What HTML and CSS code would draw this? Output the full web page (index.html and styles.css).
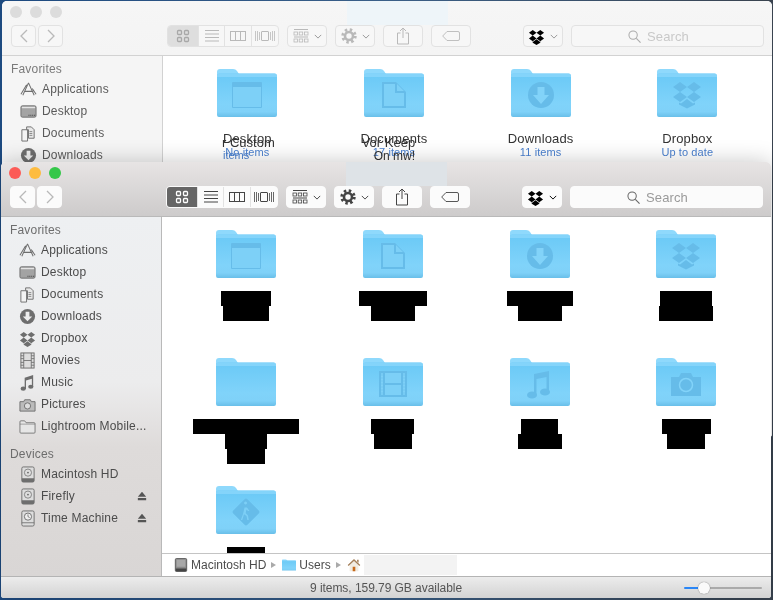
FILE: index.html
```html
<!DOCTYPE html>
<html lang="en">
<head>
<meta charset="utf-8">
<title>Finder</title>
<link rel="stylesheet" href="styles.css">
</head>
<body>
<svg class="defs" aria-hidden="true">
  <defs>
    <linearGradient id="fbody" x1="0" y1="0" x2="0" y2="1">
      <stop offset="0" stop-color="#6ac9f6"/><stop offset=".7" stop-color="#80d3fa"/><stop offset=".88" stop-color="#7fd1f8"/><stop offset="1" stop-color="#69bfe9"/>
    </linearGradient>
    <symbol id="folder" viewBox="0 0 60 48">
      <path d="M0 3a3 3 0 0 1 3-3h13c2 0 3 .8 4 2l2 3v8H0z" fill="#8fd9fc"/>
      <path d="M0 7a2.500 2.500 0 0 1 2.500-2.500H57.500A2.500 2.500 0 0 1 60 7V46a2 2 0 0 1-2 2H2a2 2 0 0 1-2-2z" fill="url(#fbody)"/>
      <path d="M0 7a2.500 2.500 0 0 1 2.500-2.500H57.500A2.500 2.500 0 0 1 60 7v1H0z" fill="#8fd9fc" opacity=".7"/>
    </symbol>
    <symbol id="g-window" viewBox="0 0 60 48">
      <rect x="15" y="13" width="30" height="26" rx="1" fill="#66bce9"/><rect x="16" y="18" width="28" height="20" fill="#7dd0f7"/>
    </symbol>
    <symbol id="g-doc" viewBox="0 0 60 48">
      <path d="M18 13h14l10 10v16H18z" fill="#66bce9"/><path d="M20 15h11v9h9v13H20z" fill="#7dd0f7"/><path d="M33 15l7 7h-7z" fill="#7dd0f7"/>
    </symbol>
    <symbol id="g-down" viewBox="0 0 60 48">
      <circle cx="30" cy="26" r="13" fill="#66bce9"/><path d="M26.500 18h7v8h4.500l-8 9-8-9h4.500z" fill="#82d3f9"/>
    </symbol>
    <symbol id="g-drop" viewBox="0 0 60 48">
      <path d="M23 13l-7 5 7 5 7-5zM37 13l-7 5 7 5 7-5zM16 28l7 5 7-5-7-5zM44 28l-7 5-7-5 7-5z" fill="#66bce9"/><path d="M30 30l-6 4.500-2-1v2l8 4 8-4v-2l-2 1z" fill="#66bce9"/>
    </symbol>
    <symbol id="g-movie" viewBox="0 0 60 48">
      <path d="M16 13h28v26H16z" fill="#66bce9"/><path d="M22 15h16v10H22zM22 27h16v10H22z" fill="#7dd0f7"/><path d="M18 15h2v22h-2zM40 15h2v22h-2z" fill="#7dd0f7" stroke="#66bce9" stroke-dasharray="2 1" stroke-width=".5"/>
    </symbol>
    <symbol id="g-music" viewBox="0 0 60 48">
      <path d="M24 16l15-3v21h-2.500V19l-10 2v16h-2.500z" fill="#66bce9"/><ellipse cx="22" cy="37" rx="5" ry="3.600" fill="#66bce9"/><ellipse cx="35" cy="34" rx="5" ry="3.600" fill="#66bce9"/>
    </symbol>
    <symbol id="g-cam" viewBox="0 0 60 48">
      <path d="M15 19h8l2-4h10l2 4h8v19H15z" fill="#66bce9"/><circle cx="30" cy="27" r="6.500" fill="none" stroke="#82d3f9" stroke-width="1.500"/>
    </symbol>
    <symbol id="g-pub" viewBox="0 0 60 48">
      <rect x="20" y="16" width="20" height="20" rx="2" transform="rotate(45 30 26)" fill="#66bce9"/>
      <path d="M29.500 18.500a1.500 1.500 0 1 1 .1 0zM27 28l1.500-6.500h2.500l2.500 3.500h-1.500l-1.500-1.500-.8 3.500 2.300 2.500.8 4.500h-1.500l-.8-4-2.500-1.800-1.700 5.800h-1.500z" fill="#82d3f9" opacity=".8"/>
    </symbol>

    <symbol id="i-apps" viewBox="0 0 18 18"><path d="M9 2L3 15M9 2l6 13M5 11h9M1 14L7 4M17 14l-4-6" fill="none" stroke="currentColor" stroke-width="1.100"/></symbol>
    <symbol id="i-desk" viewBox="0 0 18 18"><rect x="1" y="3" width="16" height="12" rx="1.500" fill="#a3a3a3" stroke="currentColor"/><rect x="2" y="4" width="14" height="1.500" fill="#e4e4e4"/><path d="M9 13h1M11 13h1M13 13h1M15 13h1" stroke="#333"/></symbol>
    <symbol id="i-docs" viewBox="0 0 18 18"><path d="M2 5h6v12H2z" fill="#f3f3f3" stroke="currentColor"/><path d="M7 2h5l3 3v9H9V5H7z" fill="#e8e8e8" stroke="currentColor"/><path d="M10 7h3M10 9h3M10 11h3" stroke="currentColor" stroke-width=".8"/></symbol>
    <symbol id="i-down" viewBox="0 0 18 18"><circle cx="9" cy="9" r="8" fill="currentColor"/><path d="M7 4h4v5h3l-5 5-5-5h3z" fill="#eee"/></symbol>
    <symbol id="i-drop" viewBox="0 0 18 18"><path d="M5 2L1 5l4 3 4-3zM13 2L9 5l4 3 4-3zM1 11l4 3 4-3-4-3zM17 11l-4 3-4-3 4-3z" fill="currentColor"/><path d="M9 12l-3.500 2.500L5 14v1.500L9 18l4-2.500V14l-.5.500z" fill="currentColor"/></symbol>
    <symbol id="i-movie" viewBox="0 0 18 18"><rect x="2" y="1" width="14" height="16" fill="#ddd" stroke="currentColor"/><path d="M5 1v16M13 1v16M5 9h8M2 4h3M2 7h3M2 11h3M2 14h3M13 4h3M13 7h3M13 11h3M13 14h3" stroke="currentColor" stroke-width=".9"/></symbol>
    <symbol id="i-music" viewBox="0 0 18 18"><path d="M6 4l9-3v12h-1.400V5L7.400 7v9H6z" fill="currentColor"/><ellipse cx="4.500" cy="15.500" rx="2.800" ry="2.200" fill="currentColor"/><ellipse cx="12.500" cy="13.500" rx="2.800" ry="2.200" fill="currentColor"/></symbol>
    <symbol id="i-pics" viewBox="0 0 18 18"><path d="M1 6h4l1-2h6l1 2h4v10H1z" fill="#bbb" stroke="currentColor"/><circle cx="9" cy="10.500" r="3.300" fill="#ddd" stroke="currentColor"/></symbol>
    <symbol id="i-folder" viewBox="0 0 18 18"><path d="M1 4a1 1 0 0 1 1-1h4l1.500 2H16a1 1 0 0 1 1 1v9a1 1 0 0 1-1 1H2a1 1 0 0 1-1-1z" fill="#e6e6e6" stroke="currentColor" stroke-width=".9"/><path d="M1 6.500h16" stroke="currentColor" stroke-width=".6"/></symbol>
    <symbol id="i-hd" viewBox="0 0 18 18"><rect x="3" y="1" width="13" height="16" rx="1.500" fill="#ddd" stroke="currentColor"/><circle cx="9.500" cy="7" r="3.800" fill="none" stroke="currentColor" stroke-width=".8"/><circle cx="9.500" cy="7" r="1" fill="currentColor"/><path d="M3 13h13v3a1 1 0 0 1-1 1H4a1 1 0 0 1-1-1z" fill="currentColor"/></symbol>
    <symbol id="i-disk" viewBox="0 0 14 16"><rect x=".5" y=".5" width="13" height="15" rx="1.500" fill="#8a8a8a" stroke="#555"/><rect x="2" y="2" width="10" height="8" fill="#a8a8a8"/><path d="M1 12h12v3H1z" fill="#444"/></symbol>
    <symbol id="i-tm" viewBox="0 0 18 18"><rect x="3" y="1" width="13" height="16" rx="1.500" fill="#ddd" stroke="currentColor"/><circle cx="9.500" cy="7" r="3.800" fill="#eee" stroke="currentColor"/><path d="M9.500 4.700V7l1.800 1M3 13.500h13" fill="none" stroke="currentColor" stroke-width=".9"/></symbol>
    <symbol id="i-eject" viewBox="0 0 12 12"><path d="M6 1l5 6H1zM1 8.500h10V11H1z" fill="currentColor"/></symbol>
    <symbol id="i-home" viewBox="0 0 16 16"><path d="M3 8v7h10V8L8 3.500z" fill="#f1ece2"/><path d="M6.500 10h3v5h-3z" fill="#c76a1c"/><path d="M8 1L.8 8l1 1L8 3.300 14.200 9l1-1zM11.500 2h1.800v3.500l-1.800-1.500z" fill="#a5805a"/></symbol>

    <symbol id="t-left" viewBox="0 0 12 16"><path d="M9 2L3 8l6 6" fill="none" stroke="currentColor" stroke-width="1.300"/></symbol>
    <symbol id="t-right" viewBox="0 0 12 16"><path d="M3 2l6 6-6 6" fill="none" stroke="currentColor" stroke-width="1.300"/></symbol>
    <symbol id="t-grid" viewBox="0 0 14 14"><rect x="1.500" y="1.500" width="4" height="4" rx="1" fill="none" stroke="currentColor" stroke-width="1.300"/><rect x="8.500" y="1.500" width="4" height="4" rx="1" fill="none" stroke="currentColor" stroke-width="1.300"/><rect x="1.500" y="8.500" width="4" height="4" rx="1" fill="none" stroke="currentColor" stroke-width="1.300"/><rect x="8.500" y="8.500" width="4" height="4" rx="1" fill="none" stroke="currentColor" stroke-width="1.300"/></symbol>
    <symbol id="t-list" viewBox="0 0 14 12"><path d="M0 .5h14M0 4h14M0 7.500h14M0 11h14" stroke="currentColor"/></symbol>
    <symbol id="t-cols" viewBox="0 0 16 10"><rect x=".5" y=".5" width="15" height="9" fill="none" stroke="currentColor"/><path d="M5.500 0v10M10.500 0v10" stroke="currentColor"/></symbol>
    <symbol id="t-flow" viewBox="0 0 20 10"><rect x="6.500" y=".5" width="7" height="9" rx=".5" fill="none" stroke="currentColor"/><path d="M.5 0v10M2.500 0v10M4.500 1v8M15.500 1v8M17.500 0v10M19.500 0v10" stroke="currentColor" stroke-width=".8"/></symbol>
    <symbol id="t-arr" viewBox="0 0 16 14"><path d="M1 .5h14" stroke="currentColor"/><rect x="1" y="3" width="3.500" height="3" fill="none" stroke="currentColor" stroke-width=".8"/><rect x="6.200" y="3" width="3.500" height="3" fill="none" stroke="currentColor" stroke-width=".8"/><rect x="11.500" y="3" width="3.500" height="3" fill="none" stroke="currentColor" stroke-width=".8"/><path d="M1 8h14" stroke="currentColor"/><rect x="1" y="10" width="3.500" height="3" fill="none" stroke="currentColor" stroke-width=".8"/><rect x="6.200" y="10" width="3.500" height="3" fill="none" stroke="currentColor" stroke-width=".8"/><rect x="11.500" y="10" width="3.500" height="3" fill="none" stroke="currentColor" stroke-width=".8"/></symbol>
    <symbol id="t-gear" viewBox="0 0 16 16"><circle cx="8" cy="8" r="6.200" fill="none" stroke="currentColor" stroke-width="3" stroke-dasharray="2.400 2.470"/><circle cx="8" cy="8" r="4" fill="none" stroke="currentColor" stroke-width="2.600"/></symbol>
    <symbol id="t-chev" viewBox="0 0 10 6"><path d="M1 1l4 4 4-4" fill="none" stroke="currentColor" stroke-width="1.200"/></symbol>
    <symbol id="t-share" viewBox="0 0 14 18"><path d="M4.500 6H1.500v11h11V6H9.500M7 11V1.500M4 4l3-3 3 3" fill="none" stroke="currentColor"/></symbol>
    <symbol id="t-tag" viewBox="0 0 18 10"><path d="M5 .5h11a1.500 1.500 0 0 1 1.500 1.500v6A1.500 1.500 0 0 1 16 9.500H5L.7 5z" fill="none" stroke="currentColor" stroke-width=".9"/></symbol>
    <symbol id="t-search" viewBox="0 0 14 14"><circle cx="5.500" cy="5.500" r="4.500" fill="none" stroke="currentColor" stroke-width="1.100"/><path d="M9 9l4.500 4.500" stroke="currentColor" stroke-width="1.200"/></symbol>
  </defs>
</svg>

<div class="desk">

  <section class="win win-back">
    <header class="head">
      <div class="titlebar">
        <div class="lights"><i class="light"></i><i class="light"></i><i class="light"></i></div>
        <svg class="home"><use href="#i-home"/></svg>
        <span class="smudge"></span>
      </div>
      <div class="toolbar">
        <div class="seg nav"><span class="btn nb"><svg class="ic-nav"><use href="#t-left"/></svg></span><span class="btn nb"><svg class="ic-nav"><use href="#t-right"/></svg></span></div>
        <div class="seg views">
          <span class="v v1 on"><svg class="ic-grid"><use href="#t-grid"/></svg></span><span class="v v2"><svg class="ic-list"><use href="#t-list"/></svg></span><span class="v v3"><svg class="ic-cols"><use href="#t-cols"/></svg></span><span class="v v4"><svg class="ic-flow"><use href="#t-flow"/></svg></span>
        </div>
        <span class="btn b40 arrbtn"><svg class="ic-arr"><use href="#t-arr"/></svg><svg class="ic-chev"><use href="#t-chev"/></svg></span>
        <span class="btn b40"><svg class="ic-gear"><use href="#t-gear"/></svg><svg class="ic-chev"><use href="#t-chev"/></svg></span>
        <span class="btn b40"><svg class="ic-share"><use href="#t-share"/></svg></span>
        <span class="btn b40"><svg class="ic-tag"><use href="#t-tag"/></svg></span>
        <span class="btn b40 dropbtn"><svg class="ic-dropbox"><use href="#i-drop"/></svg><svg class="ic-chev"><use href="#t-chev"/></svg></span>
        <span class="btn searchbox"><svg class="ic-search"><use href="#t-search"/></svg>Search</span>
      </div>
    </header>
    <div class="body">
      <aside class="side">
        <div class="side-h">Favorites</div>
        <div class="row"><svg class="ri"><use href="#i-apps"/></svg>Applications</div>
        <div class="row"><svg class="ri"><use href="#i-desk"/></svg>Desktop</div>
        <div class="row"><svg class="ri"><use href="#i-docs"/></svg>Documents</div>
        <div class="row"><svg class="ri"><use href="#i-down"/></svg>Downloads</div>
      </aside>
      <main class="main">
        <div class="grid">
          <div class="item"><svg class="folder"><use href="#folder"/><use href="#g-window"/></svg><div class="name">Desktop</div><div class="sub">No items</div><span class="ghost g1">r Custom</span><span class="ghost g1b">items</span></div>
          <div class="item"><svg class="folder"><use href="#folder"/><use href="#g-doc"/></svg><div class="name">Documents</div><div class="sub">17 items</div><span class="ghost g2">Vor Keep</span><span class="ghost g2b">On mw!</span></div>
          <div class="item"><svg class="folder"><use href="#folder"/><use href="#g-down"/></svg><div class="name">Downloads</div><div class="sub">11 items</div></div>
          <div class="item"><svg class="folder"><use href="#folder"/><use href="#g-drop"/></svg><div class="name">Dropbox</div><div class="sub">Up to date</div></div>
        </div>
      </main>
    </div>
  </section>

  <section class="win win-front">
    <header class="head">
      <div class="titlebar">
        <div class="lights"><i class="light red"></i><i class="light yel"></i><i class="light grn"></i></div>
        <svg class="home"><use href="#i-home"/></svg>
        <span class="smudge"></span>
      </div>
      <div class="toolbar">
        <div class="seg nav"><span class="btn nb"><svg class="ic-nav"><use href="#t-left"/></svg></span><span class="btn nb"><svg class="ic-nav"><use href="#t-right"/></svg></span></div>
        <div class="seg views">
          <span class="v v1 on"><svg class="ic-grid"><use href="#t-grid"/></svg></span><span class="v v2"><svg class="ic-list"><use href="#t-list"/></svg></span><span class="v v3"><svg class="ic-cols"><use href="#t-cols"/></svg></span><span class="v v4"><svg class="ic-flow"><use href="#t-flow"/></svg></span>
        </div>
        <span class="btn b40 arrbtn"><svg class="ic-arr"><use href="#t-arr"/></svg><svg class="ic-chev"><use href="#t-chev"/></svg></span>
        <span class="btn b40"><svg class="ic-gear"><use href="#t-gear"/></svg><svg class="ic-chev"><use href="#t-chev"/></svg></span>
        <span class="btn b40"><svg class="ic-share"><use href="#t-share"/></svg></span>
        <span class="btn b40"><svg class="ic-tag"><use href="#t-tag"/></svg></span>
        <span class="btn b40 dropbtn"><svg class="ic-dropbox"><use href="#i-drop"/></svg><svg class="ic-chev"><use href="#t-chev"/></svg></span>
        <span class="btn searchbox"><svg class="ic-search"><use href="#t-search"/></svg>Search</span>
      </div>
    </header>
    <div class="body">
      <aside class="side">
        <div class="side-h">Favorites</div>
        <div class="row"><svg class="ri"><use href="#i-apps"/></svg>Applications</div>
        <div class="row"><svg class="ri"><use href="#i-desk"/></svg>Desktop</div>
        <div class="row"><svg class="ri"><use href="#i-docs"/></svg>Documents</div>
        <div class="row"><svg class="ri"><use href="#i-down"/></svg>Downloads</div>
        <div class="row"><svg class="ri"><use href="#i-drop"/></svg>Dropbox</div>
        <div class="row"><svg class="ri"><use href="#i-movie"/></svg>Movies</div>
        <div class="row"><svg class="ri"><use href="#i-music"/></svg>Music</div>
        <div class="row"><svg class="ri"><use href="#i-pics"/></svg>Pictures</div>
        <div class="row"><svg class="ri"><use href="#i-folder"/></svg>Lightroom Mobile...</div>
        <div class="side-h devices">Devices</div>
        <div class="row"><svg class="ri"><use href="#i-hd"/></svg>Macintosh HD</div>
        <div class="row"><svg class="ri"><use href="#i-hd"/></svg>Firefly<svg class="eject"><use href="#i-eject"/></svg></div>
        <div class="row"><svg class="ri"><use href="#i-tm"/></svg>Time Machine<svg class="eject"><use href="#i-eject"/></svg></div>
      </aside>
      <main class="main">
        <div class="grid">
          <div class="item"><svg class="folder"><use href="#folder"/><use href="#g-window"/></svg><div class="redact"><b class="w50"></b><b class="w46"></b></div></div>
          <div class="item"><svg class="folder"><use href="#folder"/><use href="#g-doc"/></svg><div class="redact"><b class="w68"></b><b class="w44"></b></div></div>
          <div class="item"><svg class="folder"><use href="#folder"/><use href="#g-down"/></svg><div class="redact"><b class="w66"></b><b class="w44"></b></div></div>
          <div class="item"><svg class="folder"><use href="#folder"/><use href="#g-drop"/></svg><div class="redact"><b class="w52"></b><b class="w54"></b></div></div>
          <div class="item"><svg class="folder"><use href="#folder"/></svg><div class="redact"><b class="w106"></b><b class="w42"></b><b class="w38"></b></div></div>
          <div class="item"><svg class="folder"><use href="#folder"/><use href="#g-movie"/></svg><div class="redact"><b class="w43"></b><b class="w38"></b></div></div>
          <div class="item"><svg class="folder"><use href="#folder"/><use href="#g-music"/></svg><div class="redact"><b class="w37"></b><b class="w44"></b></div></div>
          <div class="item"><svg class="folder"><use href="#folder"/><use href="#g-cam"/></svg><div class="redact"><b class="w49"></b><b class="w38"></b></div></div>
          <div class="item"><svg class="folder"><use href="#folder"/><use href="#g-pub"/></svg><div class="redact"><b class="w38"></b></div></div>
        </div>
        <div class="pathbar">
          <svg class="pi"><use href="#i-disk"/></svg><span>Macintosh HD</span><i class="caret"></i>
          <svg class="pf"><use href="#folder"/></svg><span>Users</span><i class="caret"></i>
          <svg class="pi"><use href="#i-home"/></svg><span class="pblank"></span>
        </div>
      </main>
    </div>
    <footer class="status">
      <span>9 items, 159.79 GB available</span>
      <div class="slider"><i class="knob"></i></div>
    </footer>
  </section>

</div>
</body>
</html>
```

FILE: styles.css
```css
* { box-sizing: border-box; }
html, body { margin: 0; height: 100%; }
body { background: #24496f; overflow: hidden; font-family: "Liberation Sans", Arial, sans-serif; }
.defs { position: absolute; width: 0; height: 0; }
.desk { position: relative; width: 773px; height: 600px; overflow: hidden; filter: blur(.35px); background: linear-gradient(90deg, #1d4a80, #3a5f88 50%, #39434f); }

.win { position: absolute; width: 770px; height: 436px; display: flex; flex-direction: column; border-radius: 5px 5px 3px 3px; overflow: hidden; background: #fff; }
.win-back { left: 2px; top: 1px; --title: #f6f6f6; --title2: #f4f4f4; --btn: #f7f7f7; --btn-line: #e2e2e2; --ic: #b9b9b9; --txt: #5a5a5a; --head: #7a7a7a; --side: #f5f5f5; --line: #d2d2d2; --search: #c9c9c9; --smudge: #eef5f9; --on: #dedede; --on-ic: #a8a8a8; }
.win-front { left: 1px; top: 162px; --title: #e7e4e4; --title2: #cdcbcb; --btn: #fbfbfb; --btn-line: #fbfbfb; --ic: #444; --txt: #4c4c4c; --head: #6d6d6d; --side: #efeff0; --line: #b9b9b9; --search: #9a9a9a; --smudge: #dee3e7; --on: #666; --on-ic: #fff; box-shadow: 0 0 22px rgba(0,0,0,.22); }

.head { height: 55px; flex: none; display: flex; flex-direction: column; border-bottom: 1px solid var(--line); background: linear-gradient(var(--title), var(--title2)); }
.titlebar { height: 24px; flex: none; position: relative; display: flex; justify-content: center; align-items: center; }
.lights { position: absolute; left: 8px; top: 5px; display: flex; gap: 8px; }
.light { width: 12px; height: 12px; border-radius: 50%; background: #dcdcdc; }
.red { background: #fc5b57; } .yel { background: #fdbc40; } .grn { background: #34c749; }
.home { width: 16px; height: 16px; margin-top: -1px; margin-left: -1px; }
.smudge { position: absolute; left: 345px; top: 0; width: 101px; height: 24px; background: var(--smudge); }

.toolbar { display: flex; align-items: flex-start; padding-left: 9px; height: 23px; color: var(--ic); }
.seg { display: flex; }
.btn { display: flex; align-items: center; justify-content: center; height: 22px; background: var(--btn); border: 1px solid var(--btn-line); border-radius: 4px; gap: 5px; }
.nav { gap: 2px; margin-right: 104px; }
.nb { width: 25px; }
.win-front .nb { color: #b8b8b8; }
.views { height: 22px; border-radius: 4px; overflow: hidden; background: var(--btn); border: 1px solid var(--btn-line); margin-right: 8px; width: 112px; }
.v { display: flex; align-items: center; justify-content: center; width: 27px; border-left: 1px solid #e2e2e2; }
.v1 { width: 30px; border-left: 0; }
.v.on { background: var(--on); color: var(--on-ic); }
.b40 { width: 40px; margin-right: 8px; flex: none; }
.dropbtn { margin-left: 44px; color: #000; }
.searchbox { width: 193px; gap: 6px; padding-right: 18px; font-size: 13px; letter-spacing: .1px; color: var(--search); }
.ic-nav { width: 12px; height: 16px; }
.ic-grid { width: 14px; height: 14px; }
.ic-list { width: 14px; height: 12px; }
.ic-cols { width: 16px; height: 10px; }
.ic-flow { width: 20px; height: 10px; }
.ic-arr { width: 16px; height: 14px; }
.ic-gear { width: 16px; height: 16px; }
.ic-chev { width: 8px; height: 5px; }
.ic-share { width: 14px; height: 18px; }
.ic-tag { width: 18px; height: 10px; }
.ic-dropbox { width: 17px; height: 17px; }
.ic-search { width: 13px; height: 13px; color: #666; }
.win-back .ic-search { color: #aaa; }
.win-back .ic-chev { color: #999; }

.body { flex: 1; display: flex; min-height: 0; }
.side { width: 161px; flex: none; padding-top: 4px; background: var(--side); border-right: 1px solid var(--line); font-size: 12px; letter-spacing: .18px; color: var(--txt); overflow: hidden; }
.win-front .side { background: linear-gradient(#eef0f2, #ececed 46%, #dedbda 64%, #d9d6d5); }
.side-h { height: 18px; line-height: 18px; padding-left: 9px; color: var(--head); }
.devices { margin-top: 8px; }
.row { height: 22px; display: flex; align-items: center; padding-left: 18px; white-space: nowrap; color: var(--txt); }
.ri { width: 17px; height: 17px; margin-right: 5px; flex: none; color: #6e6e6e; }
.eject { width: 10px; height: 10px; margin-left: auto; margin-right: 14px; color: #555; }

.main { flex: 1; display: flex; flex-direction: column; min-width: 0; background: #fff; }
.grid { flex: 1; min-height: 0; overflow: hidden; display: grid; grid-template-columns: repeat(4, 146.67px); grid-auto-rows: 128px; padding: 13px 0 0 11px; }
.item { position: relative; display: flex; flex-direction: column; align-items: center; }
.folder { width: 60px; height: 48px; flex: none; }
.name { margin-top: 14px; font-size: 13px; line-height: 15px; letter-spacing: .15px; color: #333; }
.sub { font-size: 11px; line-height: 13px; letter-spacing: .1px; color: #4a80cf; }
.ghost { position: absolute; font-size: 13px; line-height: 15px; color: #333; white-space: nowrap; }
.g1 { top: 66px; left: 48px; }
.g1b { top: 79px; left: 49px; font-size: 11px; color: #4a80cf; }
.g2 { top: 66px; left: 41px; }
.g2b { top: 80px; left: 53px; font-size: 12px; }

.redact { margin-top: 13px; display: flex; flex-direction: column; align-items: center; filter: drop-shadow(0 0 .6px #777); }
.redact b { display: block; height: 15px; background: #000; }
.w106 { width: 106px; } .w68 { width: 68px; } .w66 { width: 66px; } .w54 { width: 54px; } .w52 { width: 52px; }
.w50 { width: 50px; } .w49 { width: 49px; } .w46 { width: 46px; } .w44 { width: 44px; } .w43 { width: 43px; }
.w42 { width: 42px; } .w38 { width: 38px; } .w37 { width: 37px; }

.pathbar { height: 23px; flex: none; display: flex; align-items: center; padding-left: 12px; gap: 3px; border-top: 1px solid #c4c4c4; background: #fff; font-size: 12px; color: #4c4c4c; }
.pi { width: 14px; height: 14px; color: #555; }
.pf { width: 14px; height: 12px; }
.caret { width: 0; height: 0; margin: 0 3px 0 2px; border-left: 5px solid #aaa; border-top: 3px solid transparent; border-bottom: 3px solid transparent; }
.pblank { width: 93px; height: 20px; margin-left: 0; background: #f3f3f3; }

.status { height: 22px; flex: none; position: relative; display: flex; align-items: center; justify-content: center; border-top: 1px solid #b4b4b4; background: linear-gradient(#ececec, #d3d3d3); font-size: 12px; letter-spacing: -.05px; color: #555; }
.slider { position: absolute; left: 683px; top: 10px; width: 78px; height: 2px; border-radius: 1px; background: linear-gradient(90deg, #2a86f6 20%, #aaa 20%); }
.knob { position: absolute; left: 14px; top: -5px; width: 12px; height: 12px; border-radius: 50%; background: #fafafa; box-shadow: 0 0 1px rgba(0,0,0,.6); }
```
